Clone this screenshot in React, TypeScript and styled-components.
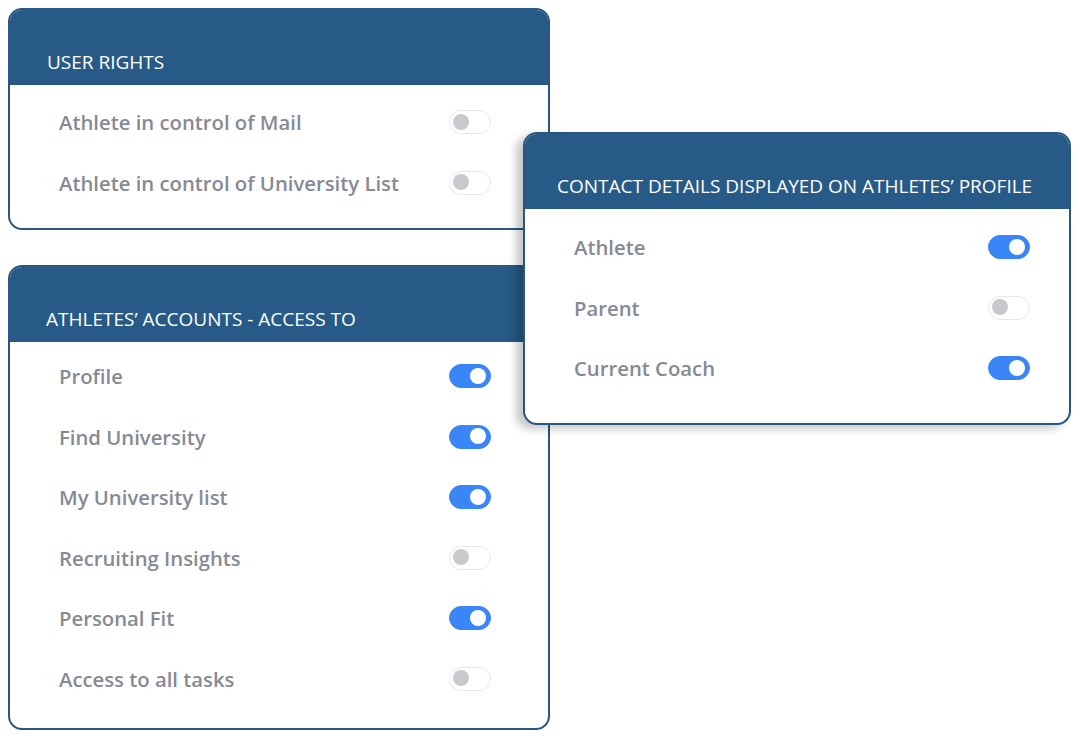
import React from 'react';
import styled, { createGlobalStyle } from 'styled-components';

const GlobalStyle = createGlobalStyle`
  body {
    margin: 0;
    background: #ffffff;
    font-family: 'Open Sans', 'Noto Sans', sans-serif;
  }
`;

type Setting = { label: string; on: boolean };

const userRights: Setting[] = [
  { label: 'Athlete in control of Mail', on: false },
  { label: 'Athlete in control of University List', on: false },
];

const accountAccess: Setting[] = [
  { label: 'Profile', on: true },
  { label: 'Find University', on: true },
  { label: 'My University list', on: true },
  { label: 'Recruiting Insights', on: false },
  { label: 'Personal Fit', on: true },
  { label: 'Access to all tasks', on: false },
];

const contactDetails: Setting[] = [
  { label: 'Athlete', on: true },
  { label: 'Parent', on: false },
  { label: 'Current Coach', on: true },
];

function Panel({ title, items, area, raised, inset, gutter, top }: {
  title: string;
  items: Setting[];
  area: string;
  raised?: boolean;
  inset: number;
  gutter: number;
  top: number;
}) {
  return (
    <Card $area={area} $raised={raised}>
      <Header $inset={inset}>{title}</Header>
      <Body $gutter={gutter} $top={top}>
        {items.map((it) => (
          <Row key={it.label}>
            <Label>{it.label}</Label>
            <Toggle $on={it.on}>
              <Knob $on={it.on} />
            </Toggle>
          </Row>
        ))}
      </Body>
    </Card>
  );
}

export default function App() {
  return (
    <>
      <GlobalStyle />
      <Stage>
        <Panel
          title="USER RIGHTS"
          items={userRights}
          area="1 / 1 / 3 / 3"
          inset={37}
          gutter={57}
          top={7}
        />
        <Panel
          title="CONTACT DETAILS DISPLAYED ON ATHLETES’ PROFILE"
          items={contactDetails}
          area="2 / 2 / 5 / 4"
          raised
          inset={32}
          gutter={39}
          top={8}
        />
        <Panel
          title="ATHLETES’ ACCOUNTS - ACCESS TO"
          items={accountAccess}
          area="4 / 1 / 6 / 3"
          inset={36}
          gutter={57}
          top={4}
        />
      </Stage>
    </>
  );
}

const Stage = styled.div`
  display: grid;
  grid-template-columns: 515px 27px 521px;
  grid-template-rows: 124px 98px 35px 160px 305px;
  padding: 8px;
`;

const Card = styled.section<{ $area: string; $raised?: boolean }>`
  grid-area: ${(p) => p.$area};
  display: flex;
  flex-direction: column;
  border: 2px solid #2b5680;
  border-radius: 14px;
  background: #ffffff;
  overflow: hidden;
  z-index: ${(p) => (p.$raised ? 2 : 1)};
  box-shadow: ${(p) => (p.$raised ? '-7px 4px 9px rgba(0, 0, 0, 0.22)' : 'none')};
`;

const Header = styled.h2<{ $inset: number }>`
  margin: 0;
  height: 75px;
  box-sizing: border-box;
  padding: 41px 0 0 ${(p) => p.$inset}px;
  background: #275a86;
  color: #ffffff;
  font-family: 'Open Sans', 'Noto Sans', sans-serif;
  font-size: 19px;
  font-weight: 500;
  line-height: 22px;
`;

const Body = styled.div<{ $gutter: number; $top: number }>`
  display: flex;
  flex-direction: column;
  padding: ${(p) => p.$top}px ${(p) => p.$gutter}px 0 49px;
`;

const Row = styled.div`
  display: flex;
  align-items: center;
  justify-content: space-between;
  height: 60.5px;
`;

const Label = styled.span`
  color: #868a95;
  font-size: 20.3px;
  font-weight: 600;
`;

const Toggle = styled.div<{ $on: boolean }>`
  position: relative;
  width: 42px;
  height: 24px;
  box-sizing: border-box;
  border-radius: 12px;
  background: ${(p) => (p.$on ? '#3a86f6' : '#ffffff')};
  border: 1.5px solid ${(p) => (p.$on ? '#3a86f6' : '#e6e8ec')};
`;

const Knob = styled.span<{ $on: boolean }>`
  position: absolute;
  top: 2.5px;
  left: ${(p) => (p.$on ? '20px' : '3px')};
  width: 16px;
  height: 16px;
  border-radius: 50%;
  background: ${(p) => (p.$on ? '#ffffff' : '#c8c9cd')};
`;
